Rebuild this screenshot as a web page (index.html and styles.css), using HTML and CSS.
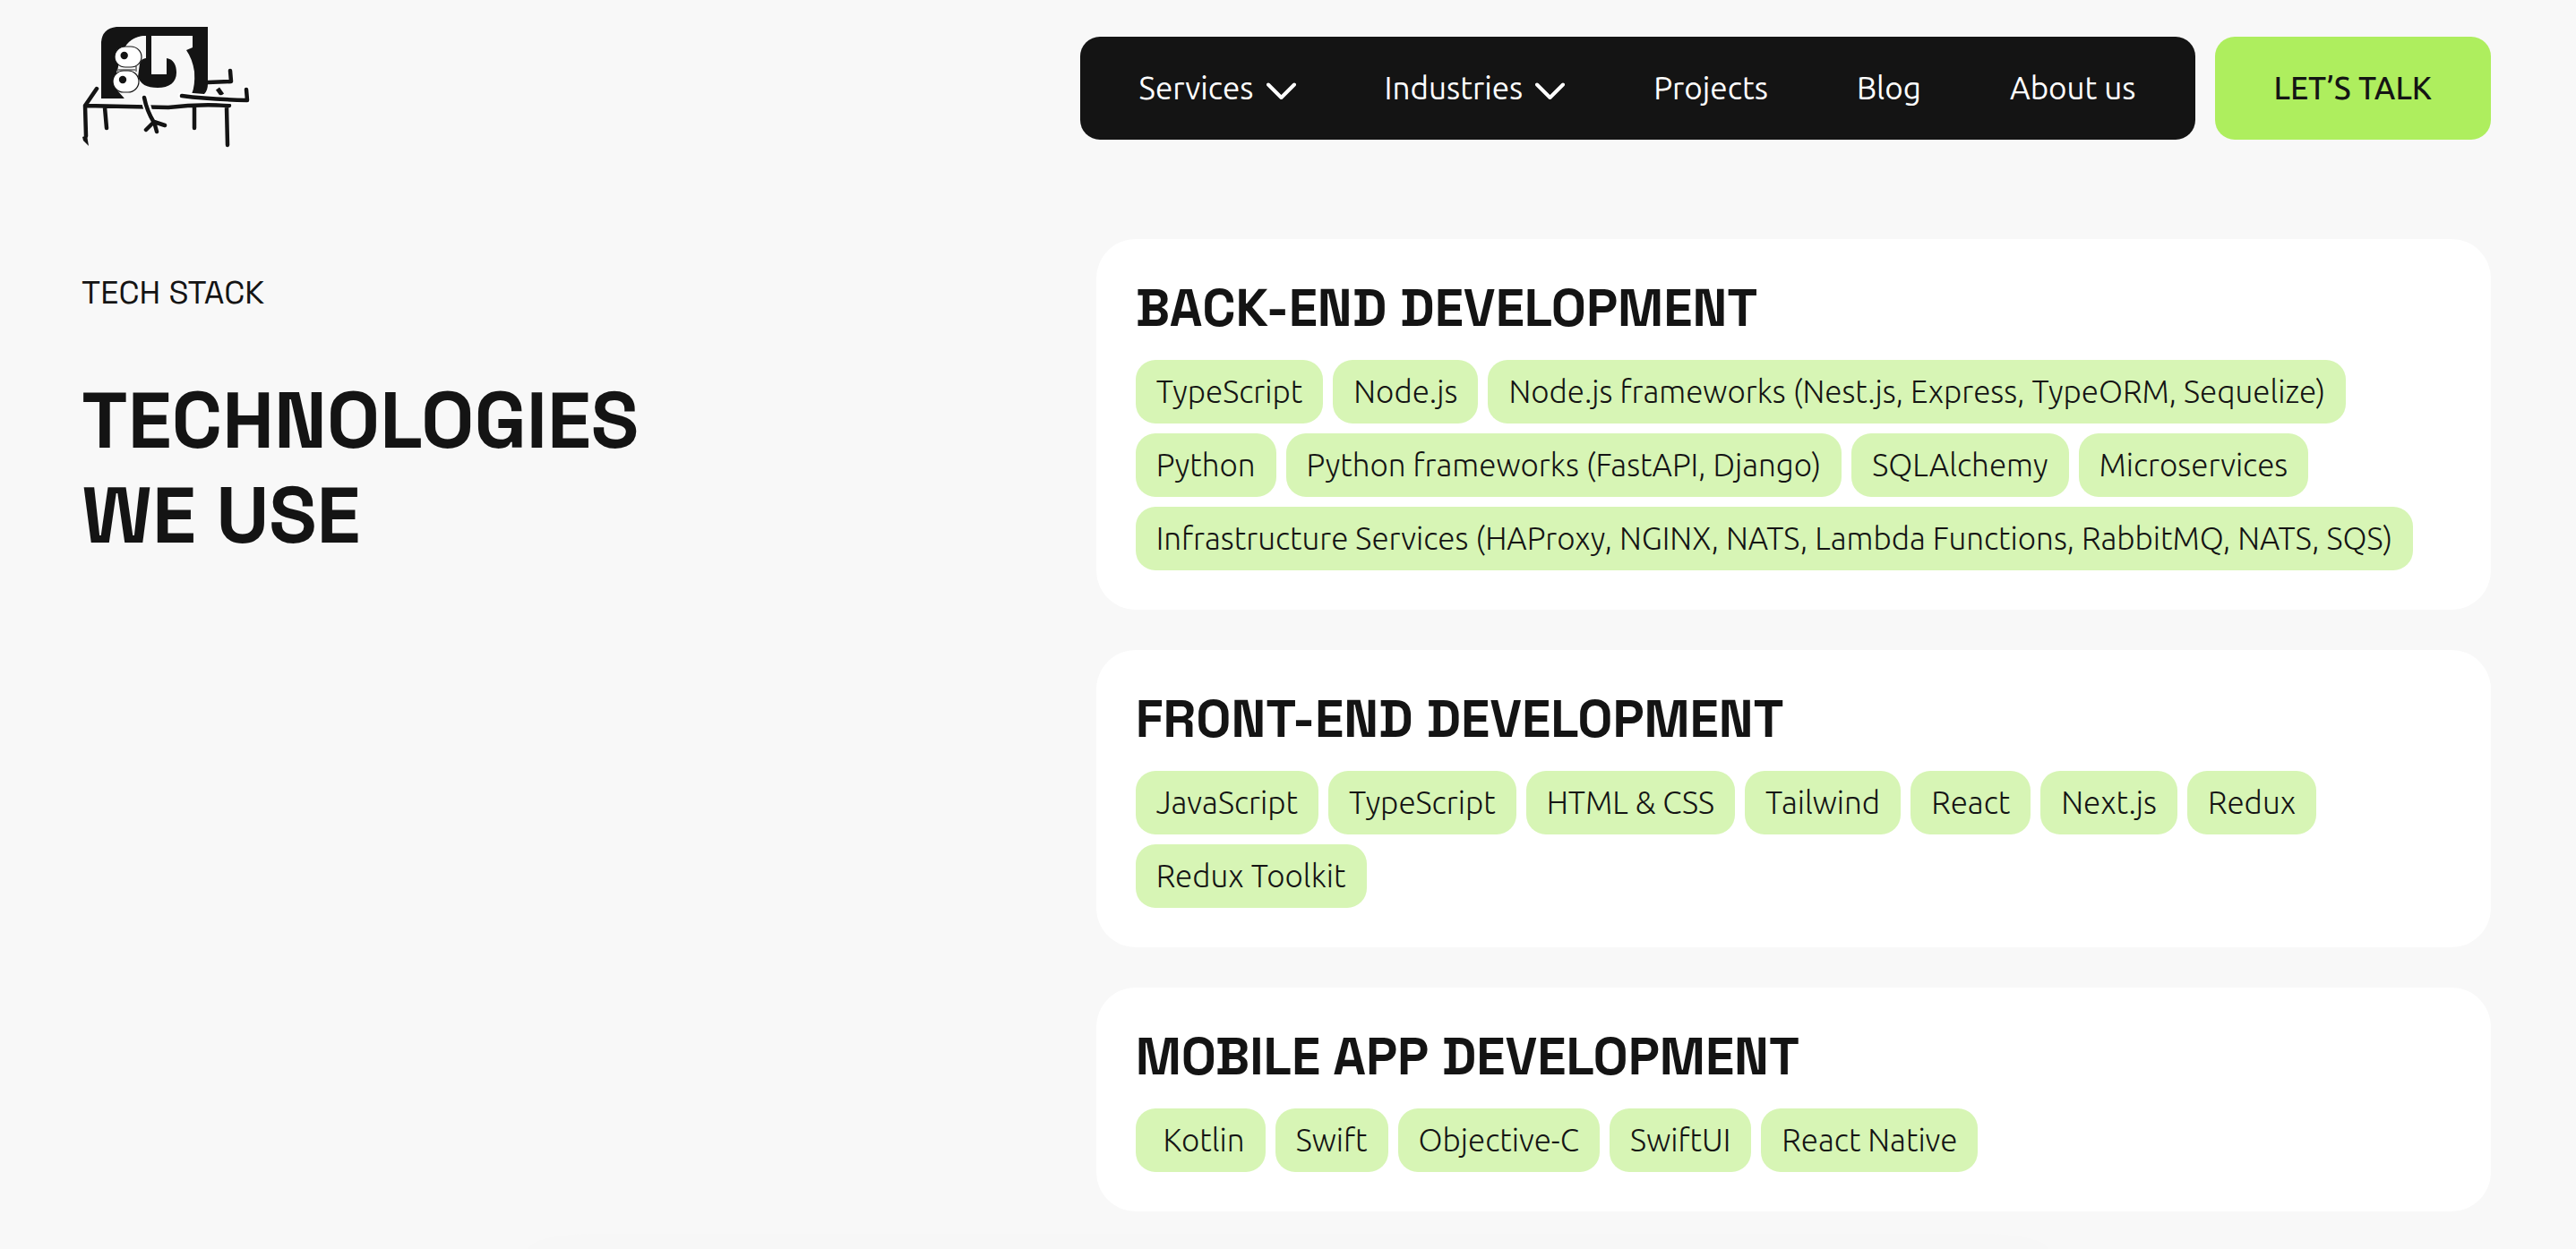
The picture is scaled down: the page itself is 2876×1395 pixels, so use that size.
FILE: index.html
```html
<!DOCTYPE html>
<html lang="en">
<head>
<meta charset="utf-8">
<meta name="viewport" content="width=device-width, initial-scale=1">
<title>Technologies we use</title>
<link rel="stylesheet" href="styles.css">
</head>
<body>
<header class="header">
  <a class="logo" href="#" aria-label="Home">
    <svg class="logo-mark" viewBox="11 8 188 141" aria-hidden="true">
      <path fill="#141414" d="M33 90V27Q34 12 50 10H152V74Q152 81 148 85H134Q138 76 137 60Q135 46 128 36L135 33V20H89V63H106V45C114 46 117 53 117 61C117 72 109 78 96 78C84 78 76 74 74 65L74 52C76 47 79 45 83 45V20C73 20 64 26 60 32L50 60V80L59 90Z"/>
      <path fill="#f8f8f8" d="M60 32C65 24 73 20 83 20V45C79 45 77 48 76 51L74 66L71 58H51Z"/>
      <path fill="#f8f8f8" d="M55 82H76L78 90H59Z"/>
      <path fill="none" stroke="#141414" stroke-width="1" d="M51 54V60M72 54V60M52 58H71"/>
      <rect x="48" y="32" width="30" height="23" rx="12" fill="#fff" stroke="#141414" stroke-width="1.200"/>
      <rect x="46" y="59" width="29" height="24" rx="12" fill="#fff" stroke="#141414" stroke-width="1.200"/>
      <circle cx="58.700" cy="42" r="4.200" fill="#141414"/>
      <circle cx="57" cy="69" r="4.200" fill="#141414"/>
      <g fill="none" stroke="#141414" stroke-width="4.500" stroke-linecap="round" stroke-linejoin="round">
        <path d="M28 79L15 98L16 132M15 98Q60 99 108 100Q140 96 176 98M37 100L39 123M137 99V123M173 99L174 142M152 72L178 71L177 59"/>
        <path d="M163 79L168 86" stroke-width="5" stroke-linecap="butt"/>
        <path stroke="#fff" stroke-width="9" d="M82 90Q84 103 91 116M123 87Q153 91 196 92L195 80"/>
        <path d="M81 89Q84 104 92 117M92 116L104 120M92 116L83 125M92 116L95 127M123 87Q153 91 196 92L195 80"/>
      </g>
      <path fill="#141414" d="M12 133L17 131L19 143L13 137Z"/>
    </svg>
  </a>
  <div class="header-actions">
    <nav class="nav" aria-label="Main">
      <button class="nav-item" type="button">Services
        <svg class="chevron" viewBox="0 0 33 20" aria-hidden="true"><path d="M2 2.500L16.500 17L31 2.500"/></svg>
      </button>
      <button class="nav-item" type="button">Industries
        <svg class="chevron" viewBox="0 0 33 20" aria-hidden="true"><path d="M2 2.500L16.500 17L31 2.500"/></svg>
      </button>
      <a class="nav-item" href="#">Projects</a>
      <a class="nav-item" href="#">Blog</a>
      <a class="nav-item" href="#">About us</a>
    </nav>
    <a class="cta" href="#">LET’S TALK</a>
  </div>
</header>

<main class="stack">
  <div class="intro">
    <p class="eyebrow">TECH STACK</p>
    <h1 class="title">TECHNOLOGIES<br>WE USE</h1>
  </div>
  <div class="cards">
    <section class="card">
      <h2 class="card-title">BACK-END DEVELOPMENT</h2>
      <ul class="chips">
        <li class="chip">TypeScript</li>
        <li class="chip">Node.js</li>
        <li class="chip">Node.js frameworks (Nest.js, Express, TypeORM, Sequelize)</li>
        <li class="chip">Python</li>
        <li class="chip">Python frameworks (FastAPI, Django)</li>
        <li class="chip">SQLAlchemy</li>
        <li class="chip">Microservices</li>
        <li class="chip">Infrastructure Services (HAProxy, NGINX, NATS, Lambda Functions, RabbitMQ, NATS, SQS)</li>
      </ul>
    </section>
    <section class="card">
      <h2 class="card-title">FRONT-END DEVELOPMENT</h2>
      <ul class="chips">
        <li class="chip">JavaScript</li>
        <li class="chip">TypeScript</li>
        <li class="chip">HTML &amp; CSS</li>
        <li class="chip">Tailwind</li>
        <li class="chip">React</li>
        <li class="chip">Next.js</li>
        <li class="chip">Redux</li>
        <li class="chip">Redux Toolkit</li>
      </ul>
    </section>
    <section class="card">
      <h2 class="card-title">MOBILE APP DEVELOPMENT</h2>
      <ul class="chips">
        <li class="chip">&nbsp;Kotlin</li>
        <li class="chip">Swift</li>
        <li class="chip">Objective-C</li>
        <li class="chip">SwiftUI</li>
        <li class="chip">React Native</li>
      </ul>
    </section>
  </div>
</main>
<div class="next-panel" aria-hidden="true"></div>
</body>
</html>
```
FILE: styles.css
```css
* {
  box-sizing: border-box;
  margin: 0;
  padding: 0;
}

body {
  display: flex;
  flex-direction: column;
  min-height: 100vh;
  background: #f8f8f8;
  color: #141414;
  font-family: Ubuntu, "Open Sans", "Noto Sans", sans-serif;
  font-size: 35px;
  line-height: 41px;
}

a {
  color: inherit;
  text-decoration: none;
}

.header {
  display: flex;
  align-items: center;
  justify-content: space-between;
  padding: 28px 95px 28px 91px;
}

.logo-mark {
  display: block;
  width: 188px;
  height: 141px;
}

.header-actions {
  display: flex;
  gap: 22px;
}

.nav {
  display: flex;
  align-items: center;
  gap: 99px;
  padding: 37px 66px;
  border-radius: 22px;
  background: #141414;
  color: #fff;
}

.nav-item {
  display: flex;
  align-items: center;
  gap: 14px;
  border: 0;
  background: none;
  color: inherit;
  font: inherit;
  white-space: nowrap;
  cursor: pointer;
}

.chevron {
  width: 33px;
  height: 20px;
  margin-top: 6px;
  fill: none;
  stroke: currentColor;
  stroke-width: 4;
  stroke-linecap: round;
  stroke-linejoin: round;
}

.cta {
  padding: 37px 66px;
  border-radius: 22px;
  background: #aeee5e;
  font-weight: 500;
  white-space: nowrap;
}

.stack {
  display: grid;
  grid-template-columns: 8fr 11fr;
  padding: 70px 95px 25px 91px;
}

.intro {
  display: flex;
  flex-direction: column;
  gap: 67px;
  padding-top: 37px;
}

.eyebrow,
.title,
.card-title {
  font-family: "Space Grotesk", Roboto, "Liberation Sans", sans-serif;
}

.eyebrow {
  font-size: 36px;
  font-weight: 400;
  line-height: 46px;
}

.title {
  font-size: 88px;
  font-weight: 600;
  line-height: 106px;
}

.cards {
  display: flex;
  flex-direction: column;
  gap: 45px;
}

.card {
  padding: 44px;
  border-radius: 44px;
  background: #fff;
}

.card-title {
  margin-bottom: 25px;
  font-size: 58px;
  font-weight: 700;
  line-height: 66px;
}

.chips {
  display: flex;
  flex-wrap: wrap;
  gap: 11px;
  list-style: none;
}

.chip {
  padding: 15px 23px;
  border-radius: 22px;
  background: #d7f5b5;
  font-weight: 300;
}

.next-panel {
  flex: 1;
  align-self: center;
  width: 59%;
  border-radius: 72px 72px 0 0 / 17px 17px 0 0;
  background: #f7f7f7;
}
```
